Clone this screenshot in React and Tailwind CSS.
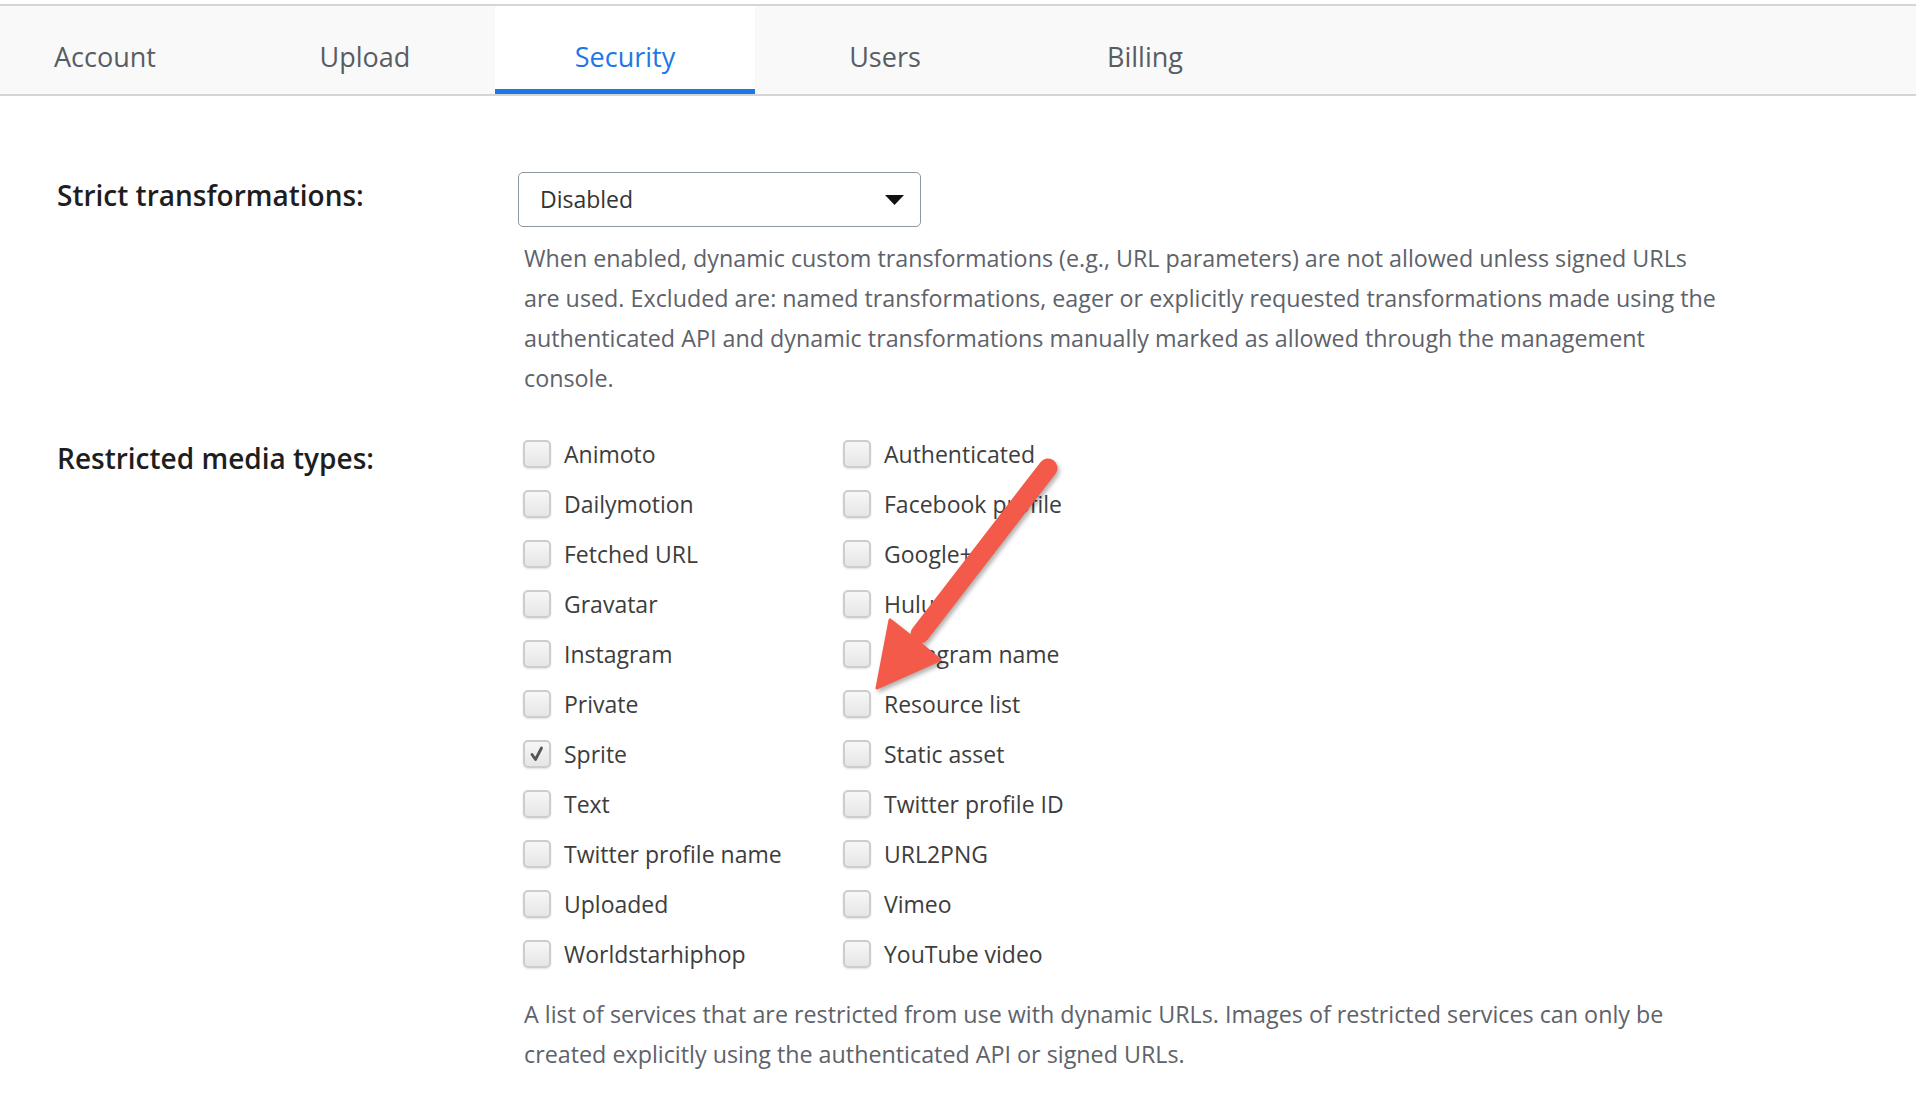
const tabs = ["Account", "Upload", "Security", "Users", "Billing"];

const mediaTypes = [
    ["Animoto", "Authenticated"],
    ["Dailymotion", "Facebook profile"],
    ["Fetched URL", "Google+"],
    ["Gravatar", "Hulu"],
    ["Instagram", "Instagram name"],
    ["Private", "Resource list"],
    ["Sprite", "Static asset"],
    ["Text", "Twitter profile ID"],
    ["Twitter profile name", "URL2PNG"],
    ["Uploaded", "Vimeo"],
    ["Worldstarhiphop", "YouTube video"],
];

const checked = ["Sprite"];

function Checkbox({ label }) {
    const on = checked.includes(label);
    return (
        <label className="flex items-center h-[50px] w-[320px] gap-[13px]">
            <span className="w-[28px] h-[28px] rounded-[5px] border-2 border-[#cdcdcd] bg-gradient-to-b from-[#f7f7f7] to-[#e6e6e6] shadow-[0_1px_2px_rgba(0,0,0,0.12)] flex items-center justify-center">
                {on && (
                    <svg width="16" height="16" viewBox="0 0 16 16">
                        <path
                            d="M3 8.5 L6.5 13.5 L12.5 2"
                            fill="none"
                            stroke="#555"
                            strokeWidth="2.8"
                            strokeLinecap="round"
                            strokeLinejoin="round"
                        />
                    </svg>
                )}
            </span>
            <span className="text-[23px] text-[#3d3d3d] leading-none">{label}</span>
        </label>
    );
}

function Arrow() {
    return (
        <svg
            className="absolute left-[860px] top-[450px] drop-shadow-[2px_3px_2px_rgba(0,0,0,0.3)]"
            width="210"
            height="250"
            viewBox="0 0 210 250"
        >
            <line
                x1="188"
                y1="18"
                x2="60"
                y2="184"
                stroke="#f35a4a"
                strokeWidth="19"
                strokeLinecap="round"
            />
            <polygon
                points="17,238 30,170 58,192 80,210"
                fill="#f35a4a"
                stroke="#f35a4a"
                strokeWidth="3"
                strokeLinejoin="round"
            />
        </svg>
    );
}

export default function App() {
    return (
        <div className="relative w-[1916px] h-[1100px] bg-white overflow-hidden font-['Open_Sans',sans-serif]">
            {/* tab bar */}
            <div className="mt-[4px] border-t-2 border-b-2 border-[#d5d5d5] bg-[#f9f9f9] h-[92px] flex -ml-[25px]">
                {tabs.map((t) =>
                    t === "Security" ? (
                        <div
                            key={t}
                            className="w-[260px] bg-white border-b-[5px] border-[#1d78e6] flex items-center justify-center text-[27px] text-[#1d78e6] pt-[19px]"
                        >
                            {t}
                        </div>
                    ) : (
                        <div
                            key={t}
                            className="w-[260px] flex items-center justify-center text-[27px] text-[#585d64] pt-[14px]"
                        >
                            {t}
                        </div>
                    )
                )}
            </div>

            {/* strict transformations */}
            <div className="flex pl-[57px] mt-[76px]">
                <div className="w-[461px] pt-[3px] text-[28px] font-semibold leading-[40px] text-[#1e1e1e]">
                    Strict transformations:
                </div>
                <div>
                    <div className="w-[403px] h-[55px] border-[1.5px] border-[#8d98a7] rounded-[5px] flex items-center justify-between pl-[21px] pr-[16px]">
                        <span className="text-[23px] font-medium text-[#333]">Disabled</span>
                        <svg width="19" height="10" viewBox="0 0 19 10">
                            <polygon points="0,0 19,0 9.5,10" fill="#111" />
                        </svg>
                    </div>
                    <p className="mt-[11px] pl-[6px] text-[23.3px] leading-[40px] text-[#5e626a] whitespace-nowrap">
                        When enabled, dynamic custom transformations (e.g., URL parameters) are not allowed unless signed URLs
                        <br />
                        are used. Excluded are: named transformations, eager or explicitly requested transformations made using the
                        <br />
                        authenticated API and dynamic transformations manually marked as allowed through the management
                        <br />
                        console.
                    </p>
                </div>
            </div>

            {/* restricted media types */}
            <div className="flex pl-[57px] mt-[31px]">
                <div className="w-[461px] pt-[9px] text-[28px] font-semibold leading-[40px] text-[#1e1e1e]">
                    Restricted media types:
                </div>
                <div>
                    <div className="pl-[5px]">
                        {mediaTypes.map(([a, b]) => (
                            <div key={a} className="flex">
                                <Checkbox label={a} />
                                <Checkbox label={b} />
                            </div>
                        ))}
                    </div>
                    <p className="mt-[15px] pl-[6px] text-[23.3px] leading-[40px] text-[#5e626a] whitespace-nowrap">
                        A list of services that are restricted from use with dynamic URLs. Images of restricted services can only be
                        <br />
                        created explicitly using the authenticated API or signed URLs.
                    </p>
                </div>
            </div>

            <Arrow />
        </div>
    );
}
